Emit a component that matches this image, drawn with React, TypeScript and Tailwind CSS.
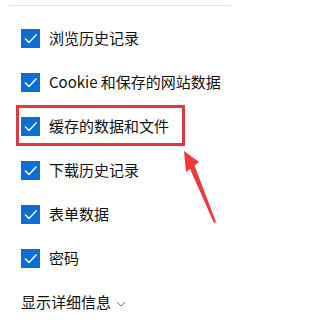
const items = [
  "浏览历史记录",
  "Cookie 和保存的网站数据",
  "缓存的数据和文件",
  "下载历史记录",
  "表单数据",
  "密码",
];

function Check() {
  return (
    <span className="flex h-[19px] w-[19px] shrink-0 items-center justify-center bg-[#0a6fd1]">
      <svg width="19" height="19" viewBox="0 0 19 19" fill="none">
        <polyline points="4,9.5 8,13.5 15.5,5.5" stroke="#fff" strokeWidth="1.4" />
      </svg>
    </span>
  );
}

export default function App() {
  return (
    <div
      className="relative h-[320px] w-[230px] overflow-hidden bg-white text-[#111]"
      style={{ fontFamily: '"Noto Sans CJK SC", "Noto Sans", sans-serif' }}
    >
      <div className="ml-[10px] mt-[5px] h-px bg-[#e3e3e3]" />

      <div className="mt-[10px] pl-[21px]">
        {items.map((label) => (
          <div key={label} className="flex h-[44px] items-center gap-[9px] text-[15px]">
            <Check />
            <span className="whitespace-nowrap">{label}</span>
          </div>
        ))}
        <div className="flex h-[44px] items-center gap-[5px] text-[15px]">
          <span>显示详细信息</span>
          <svg width="10" height="6" viewBox="0 0 10 6" fill="none" className="mt-[3px]">
            <polyline points="1,1 5,5 9,1" stroke="#777" strokeWidth="1" />
          </svg>
        </div>
      </div>

      {/* annotation: highlight box + arrow */}
      <div className="absolute left-[16px] top-[105px] h-[41px] w-[169px] border-[3px] border-[#dc3b41]" />
      <svg className="absolute left-0 top-0" width="230" height="320" viewBox="0 0 230 320">
        <polygon points="184,151 199,162 194.5,165.5 216,222 214,223 190,169 186,172" fill="#f03a3a" />
      </svg>
    </div>
  );
}
